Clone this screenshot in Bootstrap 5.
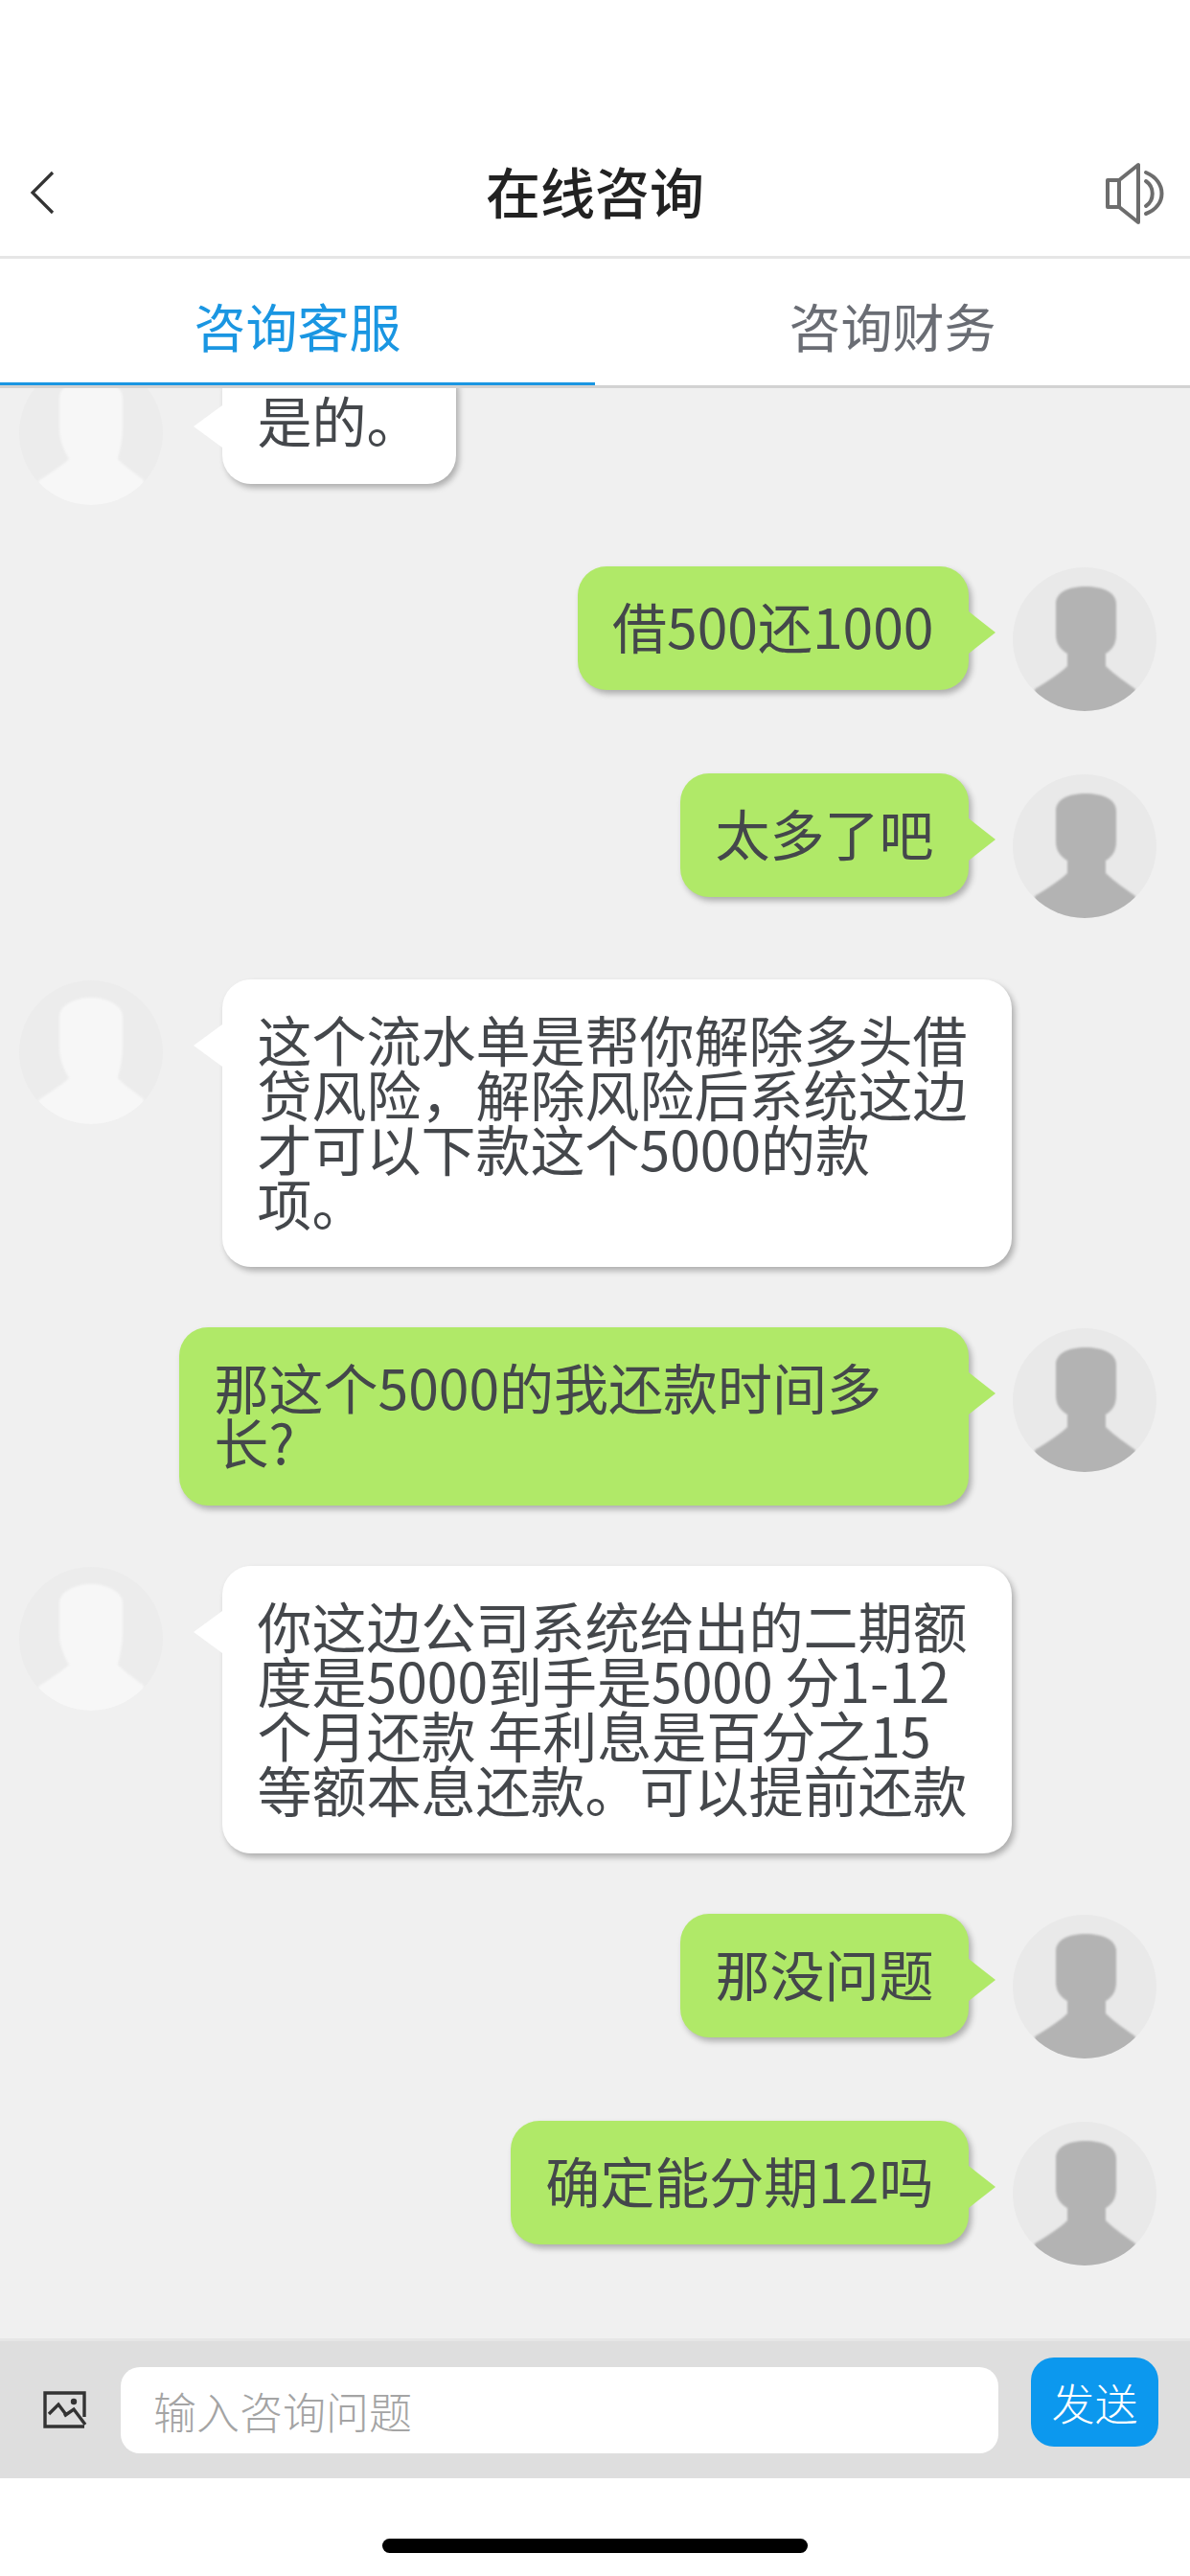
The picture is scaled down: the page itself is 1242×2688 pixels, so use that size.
<!DOCTYPE html>
<html lang="zh-CN">
<head>
  <meta charset="UTF-8" />
  <meta name="viewport" content="width=device-width, initial-scale=1.0" />
  <title>在线咨询</title>
  <link href="https://cdn.jsdelivr.net/npm/bootstrap@5.3.0/dist/css/bootstrap.min.css" rel="stylesheet" />
  <style>
    html, body { height: 2688px; overflow: hidden; }
    body { font-family: "Noto Sans CJK SC", "Liberation Sans", sans-serif; background: #fff; }
    .page-wrap { height: 2688px; }
    .top-head { height: 270px; padding-top: 134px; border-bottom: 3px solid #e6e6e6; }
    .top-head h1 { font-size: 57px; line-height: 129px; font-weight: 500; color: #222; margin: 0; }
    .head-back { left: 28px; top: 174px; }
    .head-sound { right: -1px; top: 151px; }
    .tab-bar { height: 135px; border-bottom: 3px solid #d2d2d2; }
    .tab-bar .nav-link { height: 132px; padding: 0; font-size: 54px; line-height: 139px; color: #6a6d74; border-radius: 0; }
    .tab-bar .nav-link.on { color: #1a96e2; border-bottom: 3px solid #1a96e2; }
    .chat-area { background: #f0f0f0; overflow: hidden; }
    .chat-list { margin-top: -29.5px; padding: 0 35px 0 20px; gap: 63px; }
    .msg-row { min-height: 152.5px; }
    .face { width: 150px; height: 150px; flex: none; margin-top: 1px; }
    .bubble { position: relative; max-width: 824px; padding: 33px 36.5px 39px; font-size: 57px; line-height: 57px; color: #44474b; border-radius: 30px; box-shadow: 3px 4px 6px rgba(0, 0, 0, .28); }
    .bubble::after { content: ""; position: absolute; top: 47px; border-top: 22px solid transparent; border-bottom: 22px solid transparent; }
    .from-them { background: #fff; margin-left: 62px; }
    .from-them::after { left: -30px; border-right: 30px solid #fff; }
    .from-me { background: #b0e968; margin-right: 46px; }
    .from-me::after { right: -28px; border-left: 28px solid #b0e968; }
    .input-bar { height: 146px; background: #dedede; border-top: 3px solid #e6e6e6; padding: 0 33px 0 0; }
    .pic-btn { width: 126px; flex: none; padding: 37px 0 0 20px; }
    .input-bar .form-control { width: 916px; height: 90px; margin-top: 27px; border: 0; border-radius: 20px; padding: 0 34px; font-size: 45px; font-family: inherit; font-weight: 300; }
    .input-bar .form-control::placeholder { color: #a4a4a4; }
    .send-btn { width: 133px; height: 93px; margin: 17px 0 0 34px; padding: 0; border: 0; border-radius: 24px; background: #0c98ee; color: #fff; font-size: 45px; font-weight: 300; line-height: 85px; }
    .home-zone { height: 102px; }
    .home-line { width: 444px; height: 15px; margin-top: 63px; background: #000; border-radius: 8px; }
  </style>
</head>
<body>
  <svg width="0" height="0" class="d-block">
    <defs>
      <clipPath id="faceClip"><circle cx="75" cy="75" r="75" /></clipPath>
      <filter id="faceBlur"><feGaussianBlur stdDeviation="1" /></filter>
      <symbol id="faceDark" viewBox="0 0 150 150">
        <circle cx="75" cy="75" r="75" fill="#e9e9e9" />
        <path clip-path="url(#faceClip)" filter="url(#faceBlur)" fill="#b3b3b3" d="M45 38C45 26 58 20 76 20C94 20 108 26 108 38V70C108 80 104 86 97 90V103C102 108 112 116 128 127V152H23V127C38 118 50 110 57 103V90C50 86 45 80 45 70Z" />
      </symbol>
      <symbol id="faceLight" viewBox="0 0 150 150">
        <circle cx="75" cy="75" r="75" fill="#ececec" />
        <path clip-path="url(#faceClip)" filter="url(#faceBlur)" fill="#f7f7f7" d="M42 38C42 26 58 18 75 18C92 18 108 26 108 38V70C108 80 106 90 103 102C108 108 120 116 130 124V152H20V125C30 118 46 108 52 102C45 90 42 80 42 70Z" />
      </symbol>
    </defs>
  </svg>

  <div class="page-wrap d-flex flex-column position-relative">
    <!-- header -->
    <header class="top-head text-center bg-white">
      <h1>在线咨询</h1>
    </header>
    <svg class="head-back position-absolute" width="30" height="54" viewBox="0 0 30 54" fill="none" stroke="#333" stroke-width="3.2">
      <path d="M27 6 6 27 27 48" />
    </svg>
    <svg class="head-sound position-absolute" width="122" height="100" viewBox="0 0 122 100" fill="none" stroke="#6d6d6d" stroke-width="4" stroke-linejoin="round" stroke-linecap="round">
      <path d="M35 37H47L67 21V81L47 65H35Z" />
      <path d="M47 37V65" />
      <path d="M75 38C84 44 84 58 75 64" />
      <path d="M75 29C97 38 97 64 75 72" />
    </svg>

    <!-- tabs -->
    <nav class="nav nav-fill tab-bar bg-white">
      <a class="nav-link on" href="#">咨询客服</a>
      <a class="nav-link" href="#">咨询财务</a>
    </nav>

    <!-- messages -->
    <main class="chat-area flex-grow-1">
      <div class="chat-list d-flex flex-column">
        <div class="msg-row d-flex align-items-start">
          <svg class="face"><use href="#faceLight" /></svg>
          <div class="bubble from-them">是的。</div>
        </div>
        <div class="msg-row d-flex align-items-start justify-content-end">
          <div class="bubble from-me">借500还1000</div>
          <svg class="face"><use href="#faceDark" /></svg>
        </div>
        <div class="msg-row d-flex align-items-start justify-content-end">
          <div class="bubble from-me">太多了吧</div>
          <svg class="face"><use href="#faceDark" /></svg>
        </div>
        <div class="msg-row d-flex align-items-start">
          <svg class="face"><use href="#faceLight" /></svg>
          <div class="bubble from-them">这个流水单是帮你解除多头借贷风险，解除风险后系统这边才可以下款这个5000的款项。</div>
        </div>
        <div class="msg-row d-flex align-items-start justify-content-end">
          <div class="bubble from-me">那这个5000的我还款时间多长?</div>
          <svg class="face"><use href="#faceDark" /></svg>
        </div>
        <div class="msg-row d-flex align-items-start">
          <svg class="face"><use href="#faceLight" /></svg>
          <div class="bubble from-them">你这边公司系统给出的二期额度是5000到手是5000 分1-12个月还款 年利息是百分之15等额本息还款。可以提前还款</div>
        </div>
        <div class="msg-row d-flex align-items-start justify-content-end">
          <div class="bubble from-me">那没问题</div>
          <svg class="face"><use href="#faceDark" /></svg>
        </div>
        <div class="msg-row d-flex align-items-start justify-content-end">
          <div class="bubble from-me">确定能分期12吗</div>
          <svg class="face"><use href="#faceDark" /></svg>
        </div>
      </div>
    </main>

    <!-- input -->
    <form class="input-bar d-flex align-items-start">
      <div class="pic-btn">
        <svg class="d-block" width="100" height="70" viewBox="0 0 100 70" fill="none" stroke="#333" stroke-width="3.4">
          <path d="M68 42V17H27V52H68" />
          <path d="M31 39 41 29 50 41M47 41 57 34 69 50" />
          <circle cx="57" cy="26" r="3.2" fill="#333" stroke="none" />
        </svg>
      </div>
      <input type="text" class="form-control" placeholder="输入咨询问题" />
      <button class="btn send-btn" type="button">发送</button>
    </form>

    <footer class="home-zone bg-white d-flex justify-content-center">
      <div class="home-line"></div>
    </footer>
  </div>
</body>
</html>
